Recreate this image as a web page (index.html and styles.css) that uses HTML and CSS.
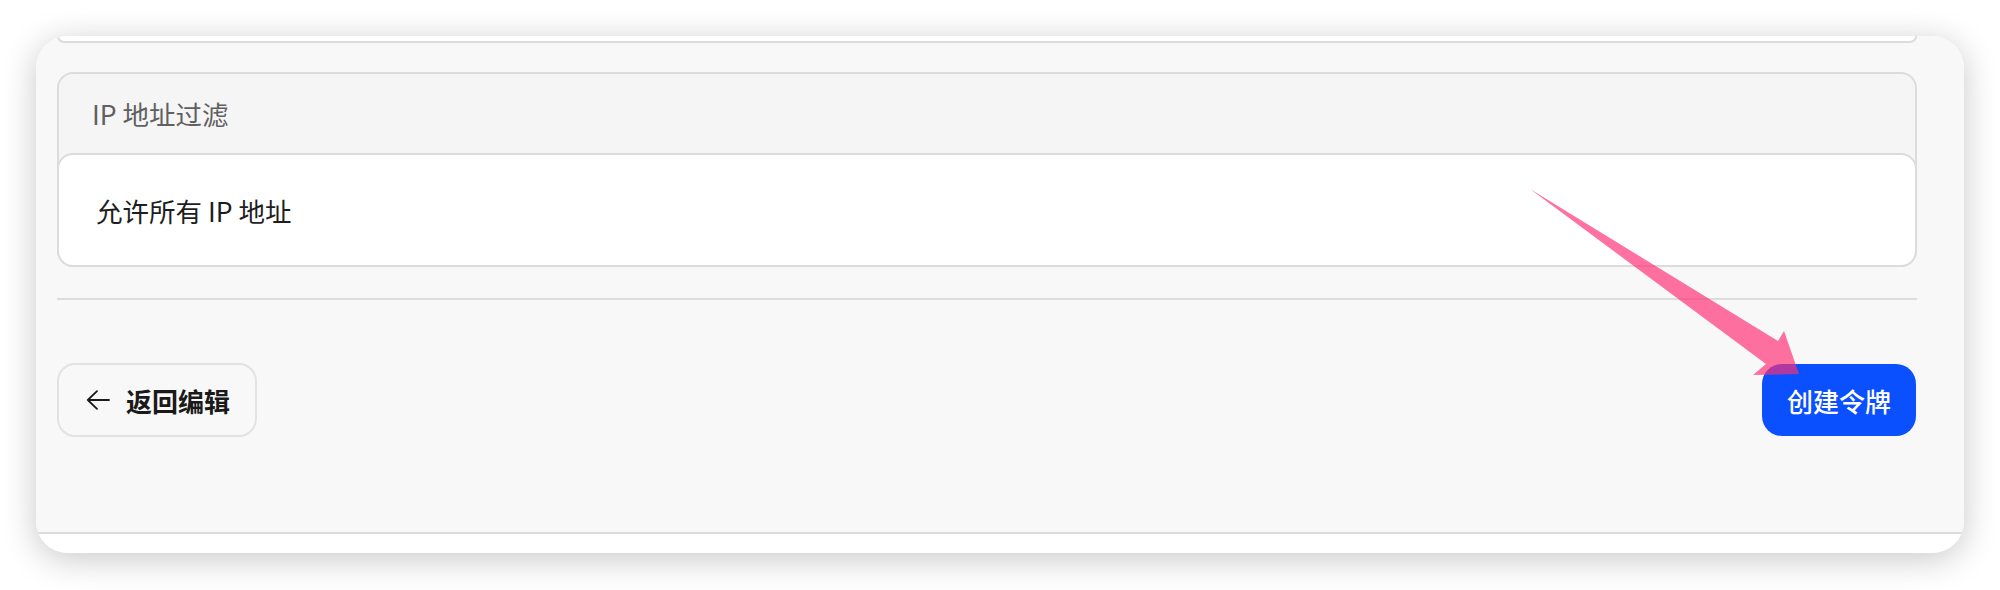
FILE: index.html
```html
<!DOCTYPE html>
<html lang="zh-CN">
<head>
<meta charset="utf-8">
<title>创建令牌</title>
<link rel="stylesheet" href="styles.css">
</head>
<body>
<div class="window">
  <div class="content">
    <div class="prev-box"></div>
    <section class="section">
      <div class="section-head">IP 地址过滤</div>
      <div class="section-body">允许所有 IP 地址</div>
    </section>
    <hr class="divider">
    <div class="footer">
      <button class="btn-back" type="button">
        <svg class="back-icon" viewBox="0 0 24 20" width="24" height="20" aria-hidden="true">
          <path d="M23 10H1.8M11 1.2L1.8 10L11 18.8" fill="none" stroke="#1a1a1a" stroke-width="1.8" stroke-linecap="round" stroke-linejoin="round"/>
        </svg>
        <span>返回编辑</span>
      </button>
      <button class="btn-create" type="button">创建令牌</button>
    </div>
  </div>
  <div class="bottom-strip"></div>
</div>
<svg class="annotation" viewBox="0 0 2000 590" width="2000" height="590" aria-hidden="true">
  <polygon points="1530,189 1778,341 1784,331 1799,374 1753,375 1766,364" fill="rgb(255,45,116)" fill-opacity="0.68"/>
</svg>
</body>
</html>
```
FILE: styles.css
```css
* { box-sizing: border-box; }

html, body {
  margin: 0;
  padding: 0;
  background: #ffffff;
  width: 2000px;
  height: 590px;
  overflow: hidden;
  font-family: "Noto Sans CJK SC", "Noto Sans", sans-serif;
}

body {
  position: relative;
  padding: 36px 0 0 36px;
}

.window {
  width: 1928px;
  height: 517px;
  border-radius: 32px;
  background: #ffffff;
  box-shadow: 0 6px 34px rgba(0, 0, 0, 0.22);
  overflow: hidden;
  display: flex;
  flex-direction: column;
}

.content {
  height: 498px;
  background: #f8f8f8;
  border-bottom: 2px solid #dcdcdc;
  padding: 0 47px 0 21px;
  display: flex;
  flex-direction: column;
}

.prev-box {
  height: 7px;
  background: #ffffff;
  border: 2px solid #dcdcdc;
  border-top: none;
  border-radius: 0 0 16px 16px;
}

.section {
  margin-top: 29px;
  border: 2px solid #dcdcdc;
  border-radius: 16px;
  background: #f5f5f5;
  display: flex;
  flex-direction: column;
}

.section-head {
  height: 79px;
  display: flex;
  align-items: center;
  padding-left: 33px;
  font-size: 26.5px;
  color: #606060;
}

.section-body {
  margin: 0 -2px -2px;
  height: 114px;
  background: #ffffff;
  border: 2px solid #dcdcdc;
  border-radius: 16px;
  display: flex;
  align-items: center;
  padding-left: 37px;
  font-size: 26.5px;
  color: #1e1e1e;
}

.divider {
  margin: 31px 0 0;
  border: none;
  height: 2px;
  background: #dcdcdc;
}

.footer {
  margin-top: 63px;
  display: flex;
  justify-content: space-between;
  align-items: center;
}

.btn-back {
  width: 200px;
  height: 74px;
  display: flex;
  align-items: center;
  gap: 16px;
  padding: 0 0 0 27px;
  background: #f8f8f8;
  border: 2px solid #e2e2e2;
  border-radius: 18px;
  font-family: inherit;
  font-size: 26px;
  font-weight: 700;
  color: #1a1a1a;
}

.back-icon {
  display: block;
  flex: none;
}

.btn-create {
  width: 154px;
  height: 72px;
  border: none;
  border-radius: 20px;
  background: #0b50ff;
  color: #ffffff;
  font-family: inherit;
  font-size: 26px;
  font-weight: 500;
  padding: 0;
  margin-right: 1px;
}

.bottom-strip {
  flex: 1;
  background: #ffffff;
}

.annotation {
  position: absolute;
  left: 0;
  top: 0;
  pointer-events: none;
}
```
